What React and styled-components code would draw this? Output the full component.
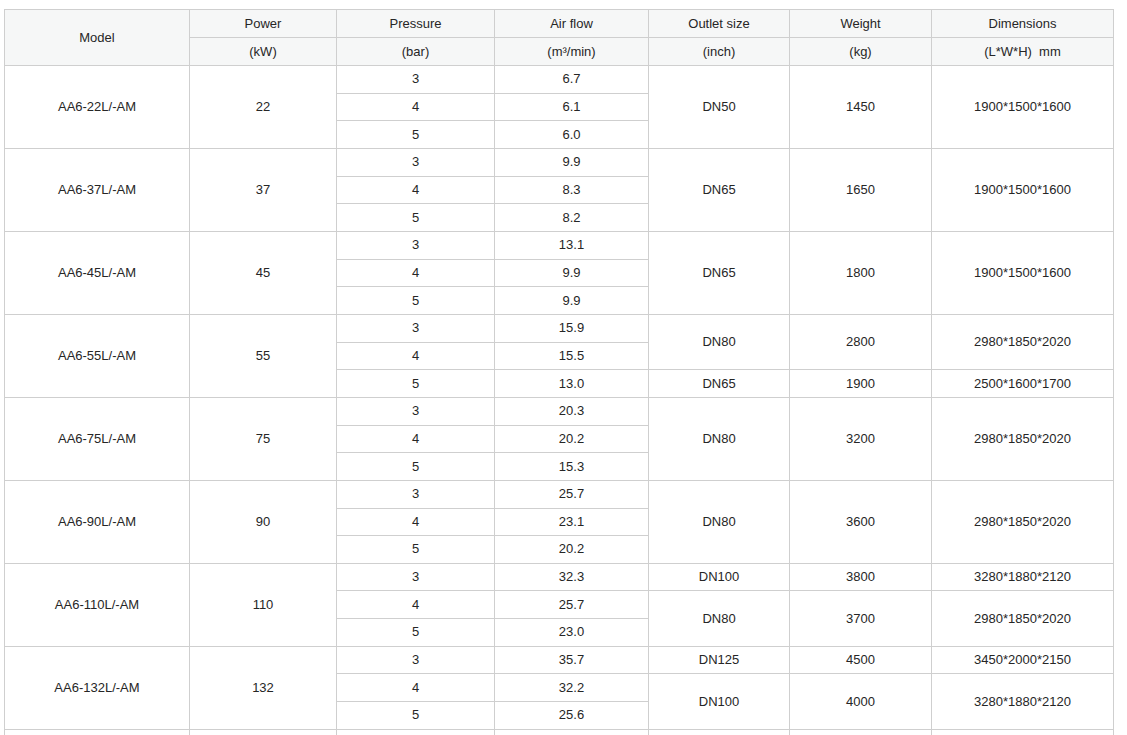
import styled, { createGlobalStyle } from 'styled-components';

const GlobalStyle = createGlobalStyle`
  html, body {
    margin: 0;
    padding: 0;
    background: #fff;
  }
  body {
    font-family: "Liberation Sans", Arial, "Noto Sans CJK SC", sans-serif;
  }
`;

const Wrapper = styled.div`
  padding: 9px 0 0 4px;
`;

const SpecTable = styled.table`
  width: 1110px;
  border-collapse: collapse;
  table-layout: fixed;
  font-size: 13px;
  color: #262626;

  td,
  th {
    border: 1px solid #cfcfcf;
    text-align: center;
    vertical-align: middle;
    padding: 0 4px;
    font-weight: normal;
    line-height: 16px;
  }
`;

const HeadRow = styled.tr`
  height: 28px;
  th {
    background-color: #f6f7f7;
  }
`;

const DataRow = styled.tr`
  height: 27.67px;
`;

const TailRow = styled.tr`
  height: 28px;
`;

const widths = [185, 147, 158, 154, 141, 142, 182];

const models = [
  {
    model: 'AA6-22L/-AM',
    power: '22',
    flows: ['6.7', '6.1', '6.0'],
    specs: [{ span: 3, outlet: 'DN50', weight: '1450', dims: '1900*1500*1600' }],
  },
  {
    model: 'AA6-37L/-AM',
    power: '37',
    flows: ['9.9', '8.3', '8.2'],
    specs: [{ span: 3, outlet: 'DN65', weight: '1650', dims: '1900*1500*1600' }],
  },
  {
    model: 'AA6-45L/-AM',
    power: '45',
    flows: ['13.1', '9.9', '9.9'],
    specs: [{ span: 3, outlet: 'DN65', weight: '1800', dims: '1900*1500*1600' }],
  },
  {
    model: 'AA6-55L/-AM',
    power: '55',
    flows: ['15.9', '15.5', '13.0'],
    specs: [
      { span: 2, outlet: 'DN80', weight: '2800', dims: '2980*1850*2020' },
      { span: 1, outlet: 'DN65', weight: '1900', dims: '2500*1600*1700' },
    ],
  },
  {
    model: 'AA6-75L/-AM',
    power: '75',
    flows: ['20.3', '20.2', '15.3'],
    specs: [{ span: 3, outlet: 'DN80', weight: '3200', dims: '2980*1850*2020' }],
  },
  {
    model: 'AA6-90L/-AM',
    power: '90',
    flows: ['25.7', '23.1', '20.2'],
    specs: [{ span: 3, outlet: 'DN80', weight: '3600', dims: '2980*1850*2020' }],
  },
  {
    model: 'AA6-110L/-AM',
    power: '110',
    flows: ['32.3', '25.7', '23.0'],
    specs: [
      { span: 1, outlet: 'DN100', weight: '3800', dims: '3280*1880*2120' },
      { span: 2, outlet: 'DN80', weight: '3700', dims: '2980*1850*2020' },
    ],
  },
  {
    model: 'AA6-132L/-AM',
    power: '132',
    flows: ['35.7', '32.2', '25.6'],
    specs: [
      { span: 1, outlet: 'DN125', weight: '4500', dims: '3450*2000*2150' },
      { span: 2, outlet: 'DN100', weight: '4000', dims: '3280*1880*2120' },
    ],
  },
];

function ModelRows({ item }) {
  const pressures = ['3', '4', '5'];
  // which sub-row each spec block starts on
  const starts = {};
  let at = 0;
  item.specs.forEach((s) => {
    starts[at] = s;
    at += s.span;
  });

  return pressures.map((p, i) => (
    <DataRow key={p}>
      {i === 0 ? (
        <>
          <td rowSpan={3}>{item.model}</td>
          <td rowSpan={3}>{item.power}</td>
        </>
      ) : null}
      <td>{p}</td>
      <td>{item.flows[i]}</td>
      {starts[i] ? (
        <>
          <td rowSpan={starts[i].span}>{starts[i].outlet}</td>
          <td rowSpan={starts[i].span}>{starts[i].weight}</td>
          <td rowSpan={starts[i].span}>{starts[i].dims}</td>
        </>
      ) : null}
    </DataRow>
  ));
}

export default function App() {
  return (
    <Wrapper>
      <GlobalStyle />
      <SpecTable>
        <colgroup>
          {widths.map((w, i) => (
            <col key={i} style={{ width: w }} />
          ))}
        </colgroup>
        <thead>
          <HeadRow>
            <th rowSpan={2}>Model</th>
            <th>Power</th>
            <th>Pressure</th>
            <th>Air flow</th>
            <th>Outlet size</th>
            <th>Weight</th>
            <th>Dimensions</th>
          </HeadRow>
          <HeadRow>
            <th>(kW)</th>
            <th>(bar)</th>
            <th>(m³/min)</th>
            <th>(inch)</th>
            <th>(kg)</th>
            <th>(L*W*H)&nbsp; mm</th>
          </HeadRow>
        </thead>
        <tbody>
          {models.map((m) => (
            <ModelRows key={m.model} item={m} />
          ))}
          <TailRow>
            {widths.map((w, i) => (
              <td key={i} />
            ))}
          </TailRow>
        </tbody>
      </SpecTable>
    </Wrapper>
  );
}
